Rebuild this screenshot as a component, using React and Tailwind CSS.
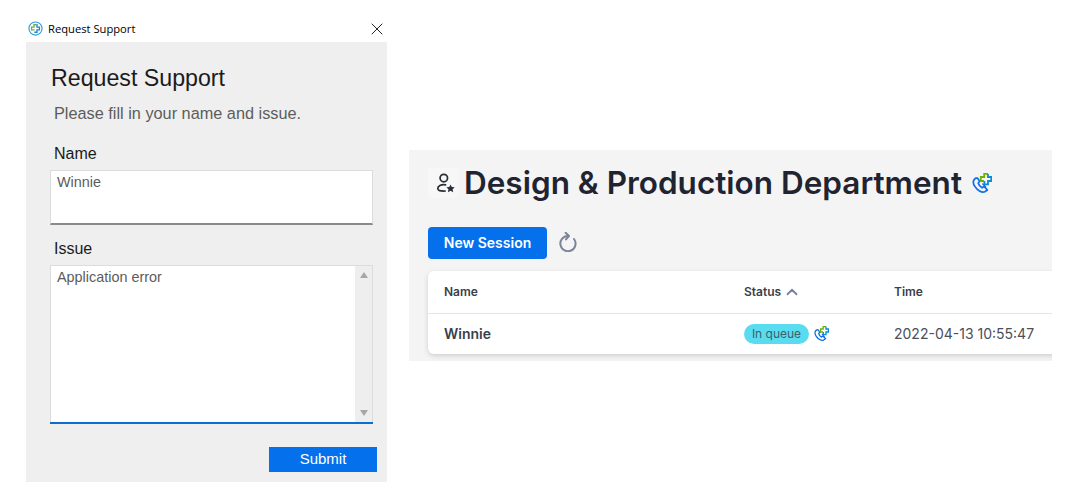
import { X, ChevronUp } from 'lucide-react';

const arial = 'font-["Liberation_Sans",Arial,sans-serif]';
const inter = 'font-["Inter",sans-serif]';

function PhonePlus({ className }) {
  return (
    <svg viewBox="0 0 20 20" fill="none" className={className}>
      <path
        d="M3.6 5.2 C0.8 7 0.6 10 2.8 13.4 C5.2 17.2 9.6 20 12.8 18.8 L15.4 17 L12 13.4 L10 14.8 C8.4 14 6.8 12 6.2 10 L7.8 8.4 L5.4 5 Z"
        stroke="#0b6fe8"
        strokeWidth="1.7"
        strokeLinejoin="round"
      />
      <path d="M10.4 10.6 C12 11.6 13.2 13 13.8 14.6" stroke="#0b6fe8" strokeWidth="1.4" />
      <path d="M12 8 H8.8 V4 H12.2 V0.9 H16" stroke="#6cb300" strokeWidth="1.8" />
      <path d="M16 0.9 V4 H19.2 V8 H16 V11.4 H12.4 V8" stroke="#0c8bd6" strokeWidth="1.8" />
    </svg>
  );
}

function AppLogo() {
  return (
    <svg viewBox="0 0 16 16" fill="none" className="h-[15px] w-[15px]">
      <circle cx="8" cy="8" r="7" stroke="#2f9bd8" strokeWidth="1.2" />
      <path d="M7 9.5 H3.8 V6.6 H6.4 V4 H9" stroke="#6cb33f" strokeWidth="1.4" />
      <path d="M9 4 H9.6 V6.6 H12.2 V9.5 H9.6 V12 H6.8" stroke="#1c86d1" strokeWidth="1.4" />
    </svg>
  );
}

function UserStar() {
  return (
    <svg viewBox="0 0 22 24" fill="none" className="h-[22px] w-[20px]">
      <circle cx="8.6" cy="6.6" r="4.1" stroke="#2a2f36" strokeWidth="1.9" />
      <path d="M10.5 14 C5.5 13.4 2 15 2 18 C2 20.4 4.5 21 10 20.8" stroke="#2a2f36" strokeWidth="1.9" strokeLinecap="round" />
      <path d="M16 13.6 L17.4 16.4 L20.6 16.8 L18.3 19 L18.9 22.1 L16 20.6 L13.1 22.1 L13.7 19 L11.4 16.8 L14.6 16.4 Z" fill="#2a2f36" />
    </svg>
  );
}

function Refresh() {
  return (
    <svg viewBox="0 0 20 20" fill="none" className="block h-[20px] w-[20px]">
      <path d="M9.8 4 A7.6 7.6 0 1 0 16 7" stroke="#7c8499" strokeWidth="2" strokeLinecap="round" />
      <path d="M7.6 0.8 L11 4 L8 7.4" stroke="#7c8499" strokeWidth="2" strokeLinecap="round" strokeLinejoin="round" />
    </svg>
  );
}

function RequestWindow() {
  return (
    <div className={`ml-[26px] mt-[16px] h-[466px] w-[361px] shrink-0 ${arial}`}>
      <div className="flex h-[26px] items-center justify-between pl-[2px]">
        <div className="flex items-center gap-[5px]">
          <AppLogo />
          <span className="font-['Open_Sans',sans-serif] text-[11.2px] text-black">Request Support</span>
        </div>
        <X className="h-[20px] w-[20px] text-[#222]" strokeWidth={1.2} />
      </div>

      <div className="h-[440px] bg-[#efefef] pl-[24px] pr-[10px] pt-[20px]">
        <h1 className="h-[32px] pl-[1px] text-[23.2px] leading-[32px] text-[#1b1b1b]">Request Support</h1>
        <p className="mt-[9px] pl-[4px] text-[16.3px] leading-[20px] text-[#5c5c5c]">Please fill in your name and issue.</p>

        <label className="mt-[21px] block pl-[4px] text-[16px] leading-[20px] text-[#1b1b1b]">Name</label>
        <div className="mr-[4px] mt-[6px] h-[55px] border border-b-2 border-[#dcdcdc] border-b-[#8a8a8a] bg-white px-[6px] pt-[1px] text-[14.4px] leading-[20px] text-[#5c5c5c]">
          Winnie
        </div>

        <label className="mt-[14px] block pl-[4px] text-[16px] leading-[20px] text-[#1b1b1b]">Issue</label>
        <div className="mr-[4px] mt-[6px] flex h-[157px] border border-b-0 border-[#dcdcdc] bg-white">
          <div className="flex-1 px-[6px] pt-[1px] text-[14.4px] leading-[20px] text-[#5c5c5c]">Application error</div>
          <div className="flex w-[17px] flex-col items-center justify-between bg-[#eeeeee] py-[6px]">
            <span className="h-0 w-0 border-x-[4px] border-b-[6px] border-x-transparent border-b-[#a6a6a6]" />
            <span className="h-0 w-0 border-x-[4px] border-t-[6px] border-x-transparent border-t-[#a6a6a6]" />
          </div>
        </div>
        <div className="mr-[4px] h-[2px] bg-[#0a6fcf]" />

        <div className="mt-[23px] flex justify-end">
          <button className="h-[25px] w-[108px] bg-[#0570eb] text-[15px] text-white">Submit</button>
        </div>
      </div>
    </div>
  );
}

function SessionPanel() {
  return (
    <div className={`ml-[22px] mt-[150px] h-[211px] w-[643px] shrink-0 overflow-hidden bg-[#f4f4f5] pl-[19px] pt-[12px] ${inter}`}>
      <div className="flex h-[41px] items-center">
        <div className="flex h-[30px] w-[30px] items-center rounded-[3px] bg-[#f7f7f8] pl-[8px]">
          <UserStar />
        </div>
        <h2 className="ml-[6px] whitespace-nowrap text-[31.5px] font-semibold leading-[41px] text-[#1f2430]">
          Design &amp; Production Department
        </h2>
        <PhonePlus className="ml-[10px] h-[20px] w-[20px]" />
      </div>

      <div className="mt-[24px] flex h-[32px] items-center">
        <button className="h-[32px] w-[119px] rounded-[4px] bg-[#0570eb] pb-[1px] text-[14px] font-semibold text-white">New Session</button>
        <span className="mb-[2px] ml-[11px]">
          <Refresh />
        </span>
      </div>

      <div className="mt-[12px] w-[640px] rounded-[6px] bg-white shadow-[0_2px_5px_rgba(0,0,0,0.15)]">
        <div className="flex h-[43px] items-center border-b border-[#e2e6ea] text-[12px] font-semibold text-[#3a3f4a]">
          <div className="w-[316px] pl-[16px]">Name</div>
          <div className="flex w-[150px] items-center gap-[2px]">
            Status
            <ChevronUp className="h-[18px] w-[18px] text-[#7c8499]" strokeWidth={2.4} />
          </div>
          <div>Time</div>
        </div>
        <div className="flex h-[40px] items-center pb-[1px]">
          <div className="w-[316px] pl-[16px] text-[14px] font-semibold text-[#3a3f4a]">Winnie</div>
          <div className="flex w-[150px] items-center gap-[5px]">
            <span className="flex h-[20px] w-[65px] items-center justify-center rounded-full bg-[#5adcf0] text-[12px] text-[#3f5f6a]">In queue</span>
            <PhonePlus className="h-[15px] w-[15px]" />
          </div>
          <div className="text-[14px] text-[#4a4f5a]">2022-04-13 10:55:47</div>
        </div>
      </div>
    </div>
  );
}

export default function App() {
  return (
    <div className="flex h-[496px] w-[1067px] items-start overflow-hidden bg-white">
      <RequestWindow />
      <SessionPanel />
    </div>
  );
}
